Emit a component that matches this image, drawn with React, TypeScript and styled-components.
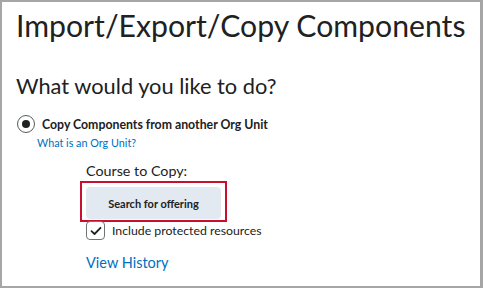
import styled, { createGlobalStyle } from 'styled-components';

const GlobalStyle = createGlobalStyle`
	html, body {
		margin: 0;
		padding: 0;
		background: #FFFFFF;
	}
	body {
		font-family: Lato, "Open Sans", sans-serif;
		color: #202122;
	}
`;

const Frame = styled.div`
	box-sizing: border-box;
	width: 483px;
	height: 288px;
	border: 2px solid #A6A6A6;
	border-right-width: 3px;
	background: #FFFFFF;
	padding: 0 14px;
	overflow: hidden;
`;

const PageTitle = styled.h1`
	margin: 4px 0 0 0;
	font-size: 30.2px;
	font-weight: 400;
	line-height: 38px;
	color: #202122;
`;

const SectionTitle = styled.h2`
	margin: 28px 0 0 0;
	font-size: 21.8px;
	font-weight: 400;
	line-height: 28px;
	color: #202122;
`;

const OptionRow = styled.div`
	display: flex;
	align-items: center;
	margin-top: 15px;
	gap: 7px;
`;

const RadioOuter = styled.span`
	box-sizing: border-box;
	width: 18px;
	height: 18px;
	margin-left: 1px;
	border-radius: 50%;
	border: 1.5px solid #565A5C;
	display: flex;
	align-items: center;
	justify-content: center;
	flex-shrink: 0;
`;

const RadioDot = styled.span`
	width: 8px;
	height: 8px;
	border-radius: 50%;
	background: #202122;
`;

const OptionLabel = styled.span`
	font-size: 12.3px;
	font-weight: 700;
	color: #202122;
`;

const HelpLink = styled.a`
	display: block;
	margin: 3px 0 0 21px;
	font-size: 10.8px;
	color: #006FBF;
	text-decoration: none;
`;

const SubSection = styled.div`
	margin-left: 70px;
	margin-top: 13px;
`;

const FieldLabel = styled.div`
	font-size: 14.3px;
	color: #202122;
	line-height: 18px;
`;

const Highlight = styled.div`
	display: inline-block;
	margin: 1px 0 0 -6px;
	border: 2px solid #C8102E;
	padding: 4px 4px 1px 4px;
	line-height: 0;
`;

const BtnSecondary = styled.button`
	width: 135px;
	height: 32px;
	border: none;
	border-radius: 4px;
	background: #E3E9F1;
	font-family: Lato, "Open Sans", sans-serif;
	font-size: 11px;
	font-weight: 700;
	line-height: 32px;
	color: #202122;
	cursor: pointer;
`;

const CheckRow = styled.label`
	display: flex;
	align-items: center;
	gap: 7px;
	margin-top: -1px;
	font-size: 12.3px;
	color: #202122;
`;

const CheckBox = styled.span`
	box-sizing: border-box;
	width: 19px;
	height: 19px;
	border: 1px solid #6E7376;
	border-radius: 4px;
	display: flex;
	align-items: center;
	justify-content: center;
`;

const HistoryLink = styled.a`
	display: block;
	margin-top: 14px;
	font-size: 14.5px;
	color: #006FBF;
	text-decoration: none;
`;

export default function App() {
	return (
		<>
			<GlobalStyle />
			<Frame>
				<PageTitle>Import/Export/Copy Components</PageTitle>
				<SectionTitle>What would you like to do?</SectionTitle>
				<OptionRow>
					<RadioOuter><RadioDot /></RadioOuter>
					<OptionLabel>Copy Components from another Org Unit</OptionLabel>
				</OptionRow>
				<HelpLink href="#">What is an Org Unit?</HelpLink>
				<SubSection>
					<FieldLabel>Course to Copy:</FieldLabel>
					<Highlight>
						<BtnSecondary>Search for offering</BtnSecondary>
					</Highlight>
					<CheckRow>
						<CheckBox>
							<svg width="12" height="10" viewBox="0 0 12 10">
								<path d="M1.5 5.2 L4.5 8 L10.5 1.8" fill="none" stroke="#202122" strokeWidth="1.8" strokeLinecap="round" strokeLinejoin="round" />
							</svg>
						</CheckBox>
						Include protected resources
					</CheckRow>
					<HistoryLink href="#">View History</HistoryLink>
				</SubSection>
			</Frame>
		</>
	);
}
